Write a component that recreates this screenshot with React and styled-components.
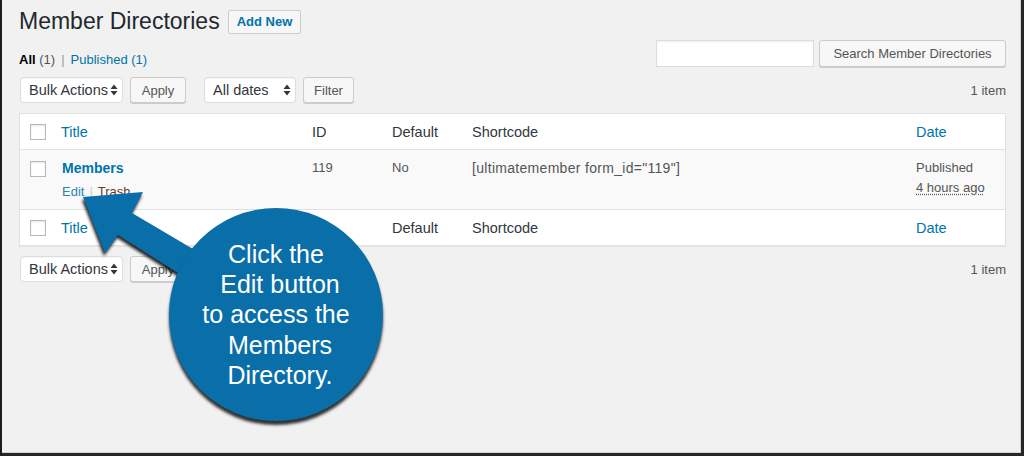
import React from 'react';
import styled, { createGlobalStyle } from 'styled-components';

const GlobalStyle = createGlobalStyle`
    html, body {
        margin: 0;
        padding: 0;
        background: #f1f1f1;
    }
    body {
        font-family: "Liberation Sans", Arial, sans-serif;
        font-size: 13px;
        color: #444;
    }
`

const Frame = styled.div`
    position: relative;
    width: 1024px;
    height: 456px;
    box-sizing: border-box;
    padding: 0 15px 0 17px;
    background: #f1f1f1;
    border-left: 2px solid #1d1d1d;
    border-right: 3px solid #262626;
    border-bottom: 3px solid #262626;
    box-shadow: inset -1px 0 0 #d4d4d4, inset 0 -1px 0 #d4d4d4;
    overflow: hidden;
`

const TitleRow = styled.div`
    display: flex;
    align-items: center;
    gap: 8px;
    padding-top: 7px;
`

const PageTitle = styled.h1`
    margin: 0;
    font-size: 23px;
    line-height: 29px;
    font-weight: 400;
    color: #23282d;
`

const TitleAction = styled.a`
    display: inline-flex;
    align-items: center;
    height: 24px;
    box-sizing: border-box;
    padding: 0 8px;
    border: 1px solid #ccc;
    border-radius: 2px;
    background: #f7f7f7;
    color: #0073aa;
    font-size: 13px;
    font-weight: 700;
    text-decoration: none;
`

const SubRow = styled.div`
    display: flex;
    justify-content: space-between;
    align-items: flex-start;
    margin-top: 4px;
`

const SubSub = styled.ul`
    display: flex;
    margin: 10px 0 0;
    padding: 0;
    list-style: none;
    line-height: 20px;
    font-size: 13px;
    color: #666;
`

const SubLink = styled.li`
    color: ${props => props.current ? '#000' : '#0073aa'};
    b {
        font-weight: ${props => props.current ? 600 : 400};
    }
    span {
        color: ${props => props.current ? '#555' : '#0073aa'};
    }
`

const Sep = styled.li`
    color: #999;
    padding: 0 6px;
`

const SearchBox = styled.div`
    display: flex;
    gap: 5px;
`

const SearchInput = styled.input`
    width: 158px;
    height: 27px;
    box-sizing: border-box;
    border: 1px solid #ddd;
    background: #fff;
    box-shadow: inset 0 1px 2px rgba(0, 0, 0, 0.07);
    margin: 0;
`

const Button = styled.button`
    height: ${props => props.tall ? '27px' : '26px'};
    box-sizing: border-box;
    padding: 0 10px;
    margin: 0;
    border: 1px solid #ccc;
    border-radius: 3px;
    background: #f7f7f7;
    box-shadow: 0 1px 0 #ccc;
    color: #555;
    font-family: inherit;
    font-size: 13px;
    width: ${props => props.w ? props.w + 'px' : 'auto'};
`

const NavRow = styled.div`
    display: flex;
    align-items: center;
    margin-top: ${props => props.bottom ? 10 : 7}px;
    height: 26px;
`

const Actions = styled.div`
    display: flex;
    align-items: center;
    gap: 7px;
    margin-right: ${props => props.last ? 0 : 18}px;
`

const Select = styled.div`
    display: flex;
    align-items: center;
    justify-content: space-between;
    width: ${props => props.w}px;
    height: 26px;
    box-sizing: border-box;
    padding: 0 4px 0 8px;
    margin-left: ${props => props.first ? 1 : 0}px;
    background: #fff;
    border: 1px solid #ddd;
    border-radius: 4px;
    box-shadow: inset 0 1px 2px rgba(0, 0, 0, 0.04);
    color: #32373c;
    font-size: 14.5px;
`

const Count = styled.div`
    margin-left: auto;
    color: #555;
    font-size: 13px;
`

const ListTable = styled.div`
    margin-top: 10px;
    background: #fff;
    border: 1px solid #e1e1e1;
    box-shadow: 0 1px 1px rgba(0, 0, 0, 0.04);
`

const Row = styled.div`
    display: grid;
    grid-template-columns: 31px 251px 80px 80px 444px 1fr;
    height: ${props => props.body ? 59 : 35}px;
    background: ${props => props.body ? '#f9f9f9' : '#fff'};
    border-top: ${props => props.first ? 'none' : '1px solid #e1e1e1'};
`

const Cell = styled.div`
    padding: ${props => props.head ? '0 10px' : '8px 10px'};
    display: ${props => props.head ? 'flex' : 'block'};
    align-items: center;
    font-size: ${props => props.head ? 14.5 : props.wide ? 14 : 13}px;
    letter-spacing: ${props => props.wide ? '0.3px' : 'normal'};
    line-height: 20px;
    color: ${props => props.link ? '#0073aa' : props.head ? '#32373c' : '#555'};
`

const CheckCell = styled.div`
    padding: ${props => props.body ? '11px 0 0 10px' : '10px 0 0 10px'};
`

const Check = styled.span`
    display: block;
    width: 16px;
    height: 16px;
    box-sizing: border-box;
    border: 1px solid #b4b9be;
    background: #fff;
    box-shadow: inset 0 1px 2px rgba(0, 0, 0, 0.1);
`

const RowTitle = styled.strong`
    display: block;
    padding-left: 1px;
    font-size: 14px;
    font-weight: 700;
    line-height: 20px;
    color: #0073aa;
`

const RowActions = styled.div`
    display: flex;
    padding: 5px 0 0 1px;
    font-size: 13px;
    line-height: 18px;
`

const RowAction = styled.span`
    color: ${props => props.danger ? '#6e3a28' : '#2f83b5'};
`

const ActionSep = styled.span`
    color: #ccc;
    padding: 0 5px;
`

const DateLine = styled.div`
    line-height: 20px;
    abbr {
        text-decoration: underline dotted;
        text-underline-offset: 2px;
    }
`

const Overlay = styled.div`
    position: absolute;
    top: 0;
    left: -2px;
    width: 1024px;
    height: 456px;
    pointer-events: none;
`

const ArrowSvg = styled.svg`
    position: absolute;
    top: 0;
    left: 0;
    filter: drop-shadow(-1px 3px 1.5px rgba(0, 0, 0, 0.85));
`

const Bubble = styled.div`
    position: absolute;
    left: 169px;
    top: 208px;
    width: 214px;
    height: 213px;
    border-radius: 50%;
    background: #0a6fa8;
    box-shadow: 0 4px 3px rgba(0, 0, 0, 0.8);
    display: flex;
    flex-direction: column;
    justify-content: center;
    align-items: center;
    color: #fff;
    font-family: "Liberation Sans", Arial, sans-serif;
    font-size: 25px;
    line-height: 30.3px;
`

const BubbleLine = styled.span`
    padding-left: ${props => props.shift || 0}px;
`

const Sorter = () => (
    <svg width="8" height="12" viewBox="0 0 8 12">
        <path d="M4 0.5 L7.5 5 H0.5 Z M4 11.5 L7.5 7 H0.5 Z" fill="#32373c" />
    </svg>
)

const columns = [
    { label: 'Title', link: true },
    { label: 'ID' },
    { label: 'Default' },
    { label: 'Shortcode' },
    { label: 'Date', link: true },
]

const HeadRow = ({ first }) => (
    <Row first={first}>
        <CheckCell><Check /></CheckCell>
        {columns.map(col => (
            <Cell head link={col.link} key={col.label}>{col.label}</Cell>
        ))}
    </Row>
)

const Toolbar = ({ bottom }) => (
    <NavRow bottom={bottom}>
        <Actions last={bottom}>
            <Select first w={103}>Bulk Actions <Sorter /></Select>
            <Button w={56}>Apply</Button>
        </Actions>
        {!bottom && (
            <Actions>
                <Select w={92}>All dates <Sorter /></Select>
                <Button w={51}>Filter</Button>
            </Actions>
        )}
        <Count>1 item</Count>
    </NavRow>
)

const App = () => {
    return (
        <>
            <GlobalStyle />
            <Frame>
                <TitleRow>
                    <PageTitle>Member Directories</PageTitle>
                    <TitleAction>Add New</TitleAction>
                </TitleRow>

                <SubRow>
                    <SubSub>
                        <SubLink current><b>All</b> <span>(1)</span></SubLink>
                        <Sep>|</Sep>
                        <SubLink>Published <span>(1)</span></SubLink>
                    </SubSub>
                    <SearchBox>
                        <SearchInput />
                        <Button tall w={187}>Search Member Directories</Button>
                    </SearchBox>
                </SubRow>

                <Toolbar />

                <ListTable>
                    <HeadRow first />
                    <Row body>
                        <CheckCell body><Check /></CheckCell>
                        <Cell>
                            <RowTitle>Members</RowTitle>
                            <RowActions>
                                <RowAction>Edit</RowAction>
                                <ActionSep>|</ActionSep>
                                <RowAction danger>Trash</RowAction>
                            </RowActions>
                        </Cell>
                        <Cell>119</Cell>
                        <Cell>No</Cell>
                        <Cell wide>[ultimatemember form_id="119"]</Cell>
                        <Cell>
                            <DateLine>Published</DateLine>
                            <DateLine><abbr>4 hours ago</abbr></DateLine>
                        </Cell>
                    </Row>
                    <HeadRow />
                </ListTable>

                <Toolbar bottom />

                <Overlay>
                    <ArrowSvg width="1024" height="456" viewBox="0 0 1024 456">
                        <polygon
                            points="83,197 143,192 132,213 215,262 200,287 118,235 105,253"
                            fill="#0a6fa8"
                        />
                    </ArrowSvg>
                    <Bubble>
                        <BubbleLine>Click the</BubbleLine>
                        <BubbleLine shift={8}>Edit button</BubbleLine>
                        <BubbleLine>to access the</BubbleLine>
                        <BubbleLine shift={8}>Members</BubbleLine>
                        <BubbleLine shift={8}>Directory.</BubbleLine>
                    </Bubble>
                </Overlay>
            </Frame>
        </>
    );
};

export default App;
